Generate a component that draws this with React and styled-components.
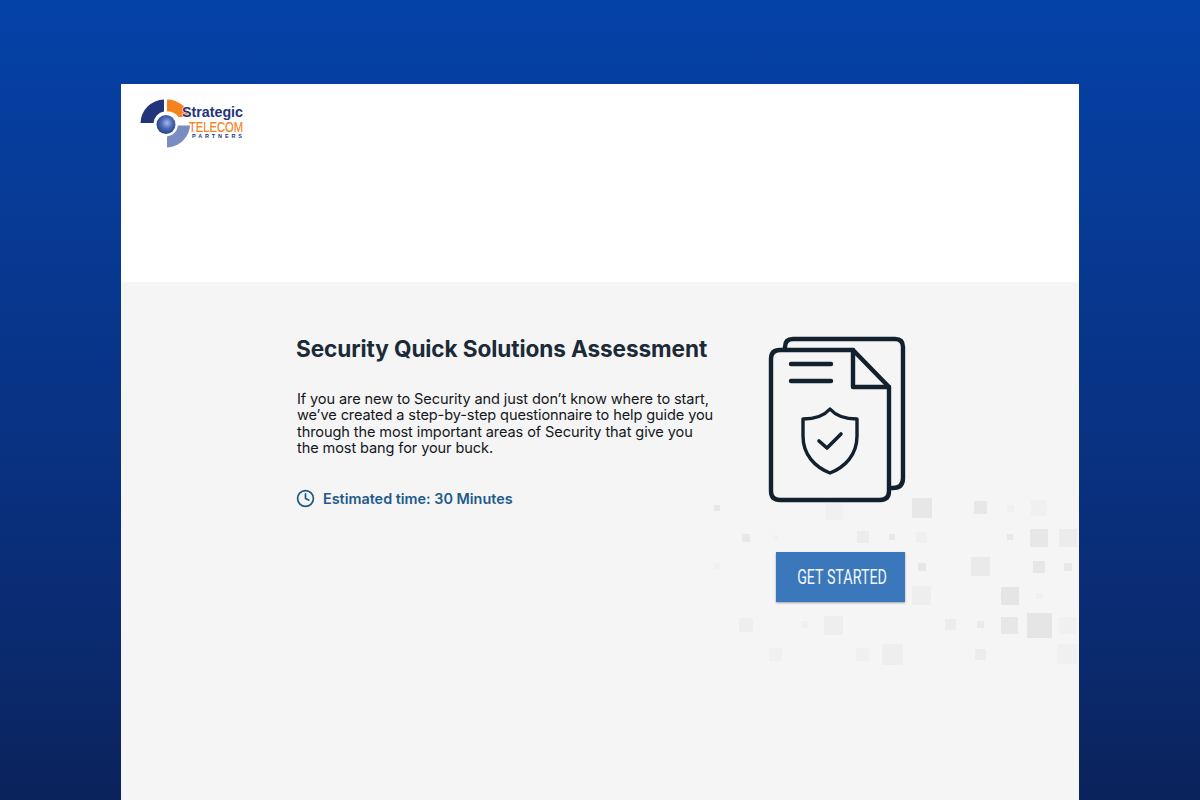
import React from "react";
import styled, { createGlobalStyle } from "styled-components";
import { Clock } from "lucide-react";

const GlobalStyle = createGlobalStyle`
  html, body {
    margin: 0;
    height: 100%;
  }
  body {
    font-family: "Inter", "Liberation Sans", sans-serif;
    overflow: hidden;
  }
`;

// page coordinates of the faded squares: x, y, width, opacity, height if not square
const squares = [
  [714, 505, 6, 0.8], [826, 503, 17, 0.3], [912, 498, 20, 0.8], [974, 501, 13, 0.8],
  [1007, 505, 7, 0.25], [1031, 500, 16, 0.3], [742, 534, 8, 0.7], [773, 535, 5, 0.2],
  [857, 531, 12, 0.5], [889, 534, 6, 0.7], [916, 532, 11, 0.25], [1007, 534, 6, 0.7],
  [1030, 529, 18, 0.8], [1059, 529, 18, 0.5], [714, 563, 6, 0.2], [918, 563, 8, 0.8],
  [971, 557, 19, 0.6], [1033, 561, 12, 0.8], [1064, 563, 8, 0.7], [912, 586, 19, 0.4],
  [1001, 587, 18, 0.9], [1036, 593, 6, 0.3], [792, 583, 25, 0.6, 19], [739, 618, 14, 0.4],
  [801, 621, 7, 0.3], [824, 616, 19, 0.4], [945, 619, 11, 0.5], [977, 621, 7, 0.6],
  [1001, 617, 17, 0.8], [1027, 613, 25, 0.9], [1059, 617, 17, 0.25], [769, 648, 13, 0.3],
  [856, 648, 13, 0.3], [882, 644, 21, 0.35], [975, 649, 11, 0.5], [1057, 644, 20, 0.3],
];

const Logo = () => (
  <LogoSvg viewBox="0 0 124 56" width="124" height="56">
    <defs>
      <radialGradient id="ball" cx="0.55" cy="0.42" r="0.6">
        <stop offset="0" stopColor="#a9bbe8" />
        <stop offset="0.5" stopColor="#4a69b5" />
        <stop offset="1" stopColor="#263f86" />
      </radialGradient>
    </defs>
    <path d="M24 3.5 V15.5 A12.5 12.5 0 0 0 13.5 27 H0.5 A24 24 0 0 1 24 3.5 Z" fill="#22357a" />
    <path d="M27 3.5 C38 3.5 47 11 51 21 H38.5 A13 13 0 0 0 27 15.5 Z" fill="#f58220" />
    <path d="M27 51.5 V40.5 A12.5 12.5 0 0 0 38 29.5 H50 C49 42 39 51 27 51.5 Z" fill="#7b8cc0" />
    <circle cx="26" cy="28.5" r="9.5" fill="url(#ball)" />
    <LogoText x="42" y="21" fontSize="15.5" fontWeight="700" fill="#22357a" stroke="#fff" strokeWidth="1" paintOrder="stroke" textLength="61" lengthAdjust="spacingAndGlyphs">Strategic</LogoText>
    <LogoText x="49" y="36" fontSize="15" fontWeight="400" fill="#f58220" stroke="#f58220" strokeWidth="0.2" textLength="54" lengthAdjust="spacingAndGlyphs">TELECOM</LogoText>
    <LogoText x="52" y="42" fontSize="5.5" fontWeight="700" fill="#22357a" textLength="50" lengthAdjust="spacing">PARTNERS</LogoText>
  </LogoSvg>
);

const DocIcon = () => (
  <svg viewBox="760 330 155 180" width="155" height="180" fill="none" stroke="#13202d" strokeLinecap="round" strokeLinejoin="round">
    <g strokeWidth="4.4">
      <path d="M785 349 V347 Q785 339 793 339 H895 Q903 339 903 347 V478 Q903 488 893 488 H889" />
      <path d="M853 350 H780 Q771 350 771 359 V491 Q771 500 780 500 H880 Q889 500 889 491 V387 Z" />
      <path d="M853 350 V387 H889" />
      <path d="M791 364 H831" />
      <path d="M791 381 H831" />
    </g>
    <path
      d="M830 409 C824 416 814 419 803 419 V436 C803 455 815 467 830 473 C845 467 857 455 857 436 V419 C846 419 836 416 830 409 Z"
      strokeWidth="3.4"
    />
    <path d="M819 441 L827 448 L841 434" strokeWidth="3.6" />
  </svg>
);

const App = () => {
  return (
    <Page>
      <GlobalStyle />
      <Panel>
        <Header>
          <Logo />
        </Header>
        <Body>
          {squares.map(([x, y, size, opacity, height], i) => (
            <Square
              key={i}
              style={{ left: x - 121, top: y - 282, width: size, height: height ?? size, opacity }}
            />
          ))}
          <Intro>
            <Title>Security Quick Solutions Assessment</Title>
            <Description>
              If you are new to Security and just don’t know where to start,
              <br />
              we’ve created a step-by-step questionnaire to help guide you
              <br />
              through the most important areas of Security that give you
              <br />
              the most bang for your buck.
            </Description>
            <Estimate>
              <Clock size={19} strokeWidth={2.2} />
              Estimated time: 30 Minutes
            </Estimate>
          </Intro>
          <Side>
            <DocIcon />
            <StartButton>
              <ButtonLabel>GET STARTED</ButtonLabel>
            </StartButton>
          </Side>
        </Body>
      </Panel>
    </Page>
  );
};

const Page = styled.div`
  height: 100vh;
  padding-top: 84px;
  box-sizing: border-box;
  overflow: hidden;
  background: linear-gradient(180deg, #0542a8 0%, #0a2c74 75%, #0b235c 100%);
`;

const Panel = styled.main`
  width: 958px;
  height: 716px;
  margin: 0 auto;
  display: flex;
  flex-direction: column;
`;

const Header = styled.header`
  height: 198px;
  flex: none;
  background: #fff;
  padding: 12px 0 0 19px;
  box-sizing: border-box;
`;

const LogoSvg = styled.svg`
  display: block;
`;

const LogoText = styled.text`
  font-family: "Liberation Sans", sans-serif;
`;

const Body = styled.section`
  flex: 1;
  position: relative;
  display: flex;
  background: #f5f5f5;
  padding: 48px 0 0 175px;
`;

const Square = styled.span`
  position: absolute;
  background: #e3e3e3;
`;

const Intro = styled.div`
  position: relative;
  width: 464px;
  flex: none;
`;

const Title = styled.h1`
  margin: 1px 0 0;
  font-size: 22.6px;
  line-height: 36px;
  font-weight: 700;
  letter-spacing: -0.1px;
  color: #1b2a36;
  white-space: nowrap;
`;

const Description = styled.p`
  margin: 24px 0 0 1px;
  font-size: 14.55px;
  line-height: 16.4px;
  letter-spacing: -0.1px;
  color: #14181c;
  white-space: nowrap;
`;

const Estimate = styled.div`
  display: flex;
  align-items: center;
  gap: 8px;
  margin: 32px 0 0;
  font-size: 14.4px;
  line-height: 20px;
  font-weight: 600;
  color: #1d5a8a;
`;

const Side = styled.div`
  position: relative;
  display: flex;
  flex-direction: column;
  align-items: flex-start;
  gap: 42px;
`;

const StartButton = styled.button`
  width: 129px;
  height: 50px;
  margin-left: 16px;
  border: 0;
  padding: 0 2px 0 0;
  background: rgba(50, 114, 184, 0.96);
  box-shadow: 0 1px 2px rgba(0, 0, 0, 0.35);
  color: #f2f6fb;
  font-family: "Roboto", "Liberation Sans", sans-serif;
`;

const ButtonLabel = styled.span`
  display: inline-block;
  font-size: 21px;
  white-space: nowrap;
  transform: scaleX(0.68);
`;

export default App;
